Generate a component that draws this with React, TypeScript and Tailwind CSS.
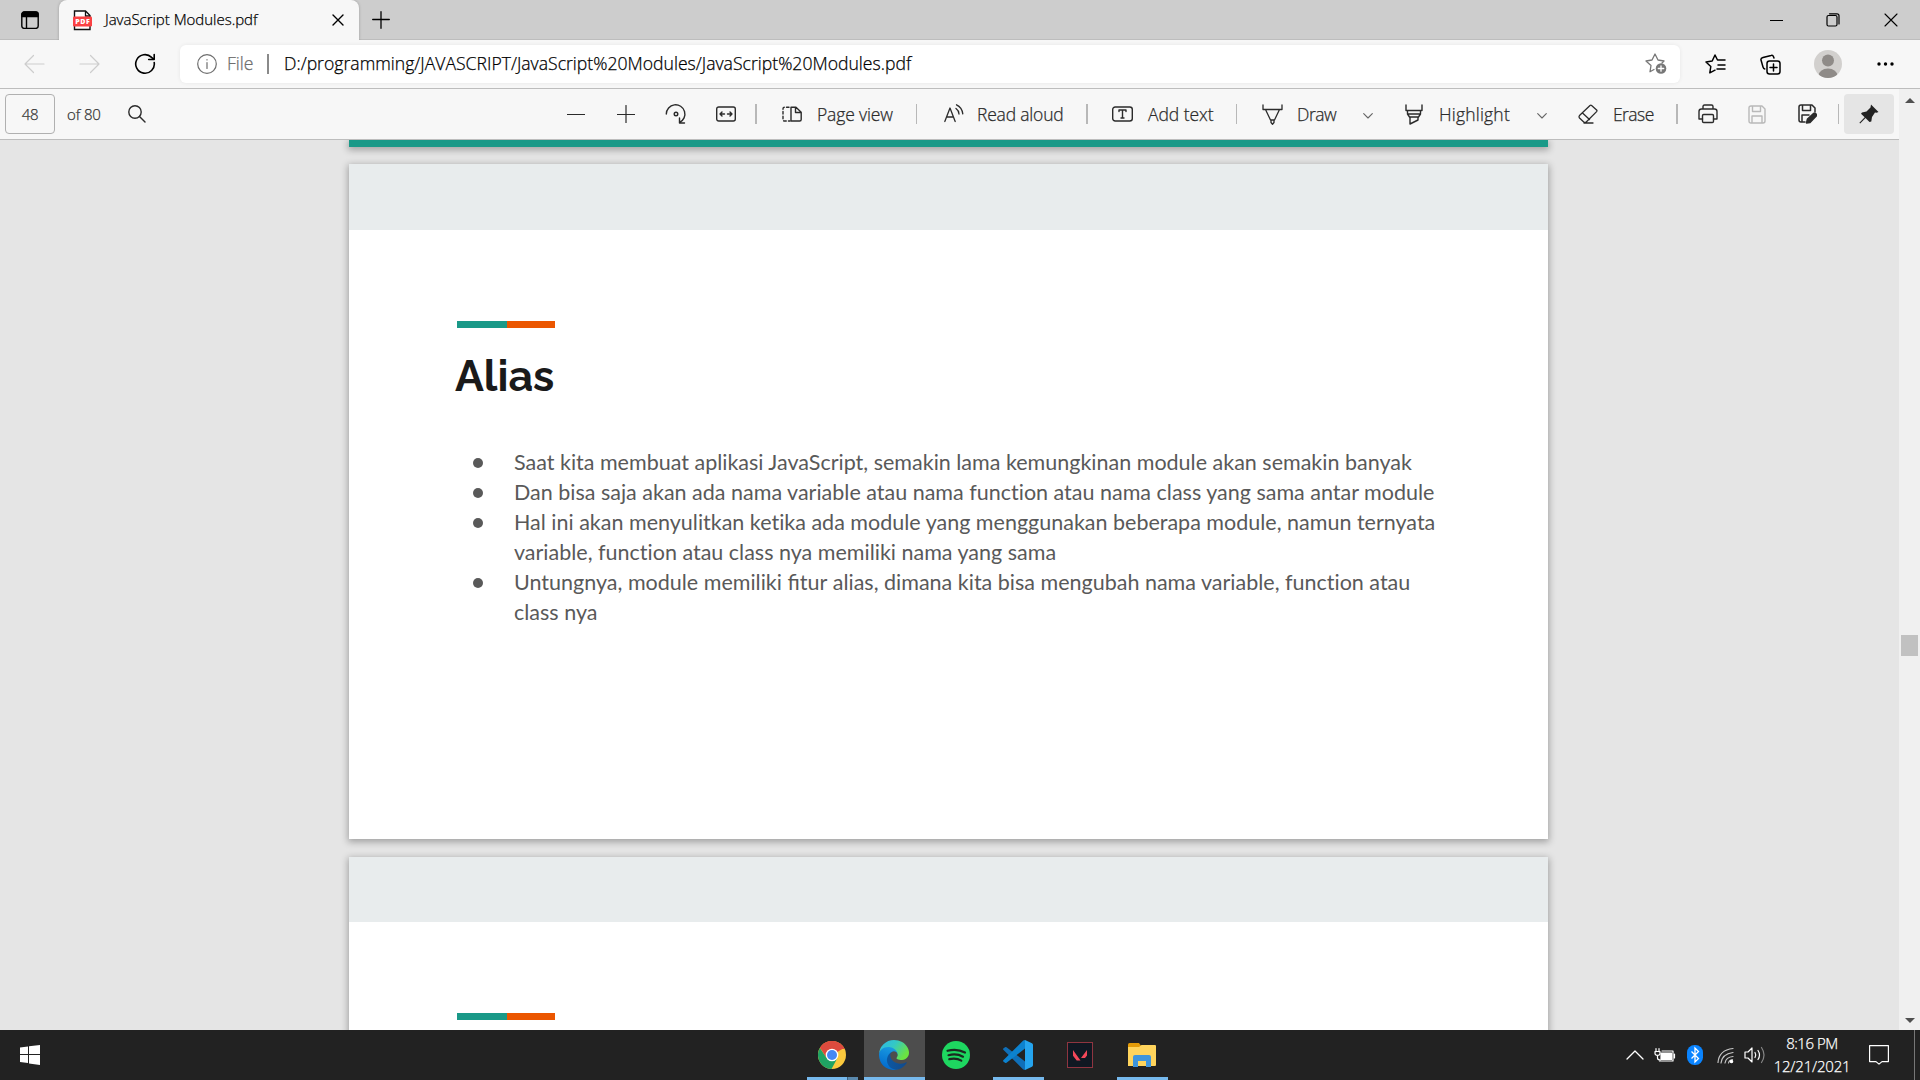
import React from "react";

type IconProps = { w?: number; h?: number; className?: string; children: React.ReactNode; sw?: number };

/* Line icon drawn on a pixel-sized canvas */
function Icon({ w = 20, h = 20, className = "", children, sw = 1.2 }: IconProps) {
  return (
    <svg width={w} height={h} viewBox={`0 0 ${w} ${h}`} fill="none" stroke="currentColor" strokeWidth={sw} strokeLinecap="round" strokeLinejoin="round" className={`shrink-0 ${className}`}>
      {children}
    </svg>
  );
}

function TitleBar() {
  return (
    <div className="flex h-10 shrink-0 bg-[#cdcdcd] shadow-[inset_0_-1px_0_#bdbdbd]">
      <div className="flex w-[59px] items-center pl-[21px]">
        <Icon w={18} h={18} sw={1.4}>
          <rect x="0.8" y="1" width="16.4" height="16.4" rx="2.5" />
          <path d="M1 3.5Q1 1 3.5 1h11Q17 1 17 3.5v2H1z" fill="currentColor" />
          <path d="M5.5 5v12" />
        </Icon>
      </div>
      <div className="relative z-10 flex h-10 w-[300px] items-center rounded-t-lg bg-[#f7f7f7] shadow-[0_0_3px_rgba(0,0,0,0.25)] [clip-path:inset(0_-4px_0_-4px)]">
        <svg width="19" height="21" viewBox="0 0 19 21" className="ml-[14px] shrink-0">
          <path d="M1.5 1h11l4.5 4.5V19.500H1.500z" fill="#fff" stroke="#111" strokeWidth="1.4" />
          <path d="M12.500 1v5H17" fill="none" stroke="#111" strokeWidth="1.300" />
          <rect x="0" y="6.500" width="19" height="10" rx="1.200" fill="#fa4143" />
          <text x="9.500" y="14.200" textAnchor="middle" fontSize="7" fontWeight="800" fill="#fff" fontFamily="Open Sans, sans-serif" textLength="14.500">PDF</text>
        </svg>
        <span className="ml-[13px] w-[200px] pb-px text-[15px] tracking-[-0.02px] whitespace-nowrap">JavaScript Modules.pdf</span>
        <Icon w={12} h={12} className="absolute top-[14px] left-[273px]" sw={1.4}>
          <path d="M1 1l10 10M11 1L1 11" />
        </Icon>
      </div>
      <Icon w={18} h={18} className="mt-[11px] ml-[13px]" sw={1.3}>
        <path d="M9 .7v16.600M.7 8.500h16.600" />
      </Icon>
      <div className="ml-auto flex items-center pr-[22px]">
        <Icon w={13} h={13} className="mr-[43px]"><path d="M0 6.500h13" /></Icon>
        <Icon w={14} h={14} className="mr-[44px]">
          <rect x="1" y="2.500" width="10" height="10.500" rx="1.500" />
          <path d="M3.500.8H11q2 0 2 2V11" />
        </Icon>
        <Icon w={14} h={14} sw={1.1}><path d="M1 1l12 12M13 1L1 13" /></Icon>
      </div>
    </div>
  );
}

function AddressBar() {
  return (
    <div className="flex h-12 shrink-0 items-center bg-[#f7f7f7] text-black">
      <Icon w={21} h={20} className="ml-[24px] text-[#cdcdcd]"><path d="M20 10H1M9.500 1.500L1 10l8.500 8.500" /></Icon>
      <Icon w={21} h={20} className="ml-[34px] text-[#cdcdcd]"><path d="M1 10h19M11.500 1.500L20 10l-8.500 8.500" /></Icon>
      <Icon w={22} h={22} className="ml-[34px]" sw={1.6}>
        <path d="M20.200 9.500A9.300 9.300 0 1 1 17.600 4.400L20 6.500M20.200 1.500v5h-5.500" />
      </Icon>
      <div className="ml-[24px] flex h-[38px] w-[1500px] items-center rounded-md bg-white shadow-[0_0_4px_rgba(0,0,0,0.07)]">
        <Icon w={20} h={20} className="ml-[17px] text-[#6e6e6e]">
          <circle cx="10" cy="10" r="9.300" />
          <path d="M10 8.500v6M10 5.700v.2" />
        </Icon>
        <span className="ml-[10px] w-[40px] pb-px text-[17.600px] text-[#6e6e6e]">File</span>
        <div className="h-5 w-[2px] bg-[#8a8a8a]" />
        <span className="ml-[15px] pb-px text-[17.600px] tracking-[0.01px] whitespace-nowrap">D:/programming/JAVASCRIPT/JavaScript%20Modules/JavaScript%20Modules.pdf</span>
        <Icon w={22} h={22} className="mr-[13px] ml-auto text-[#777]" sw={1.3}>
          <path d="M9 16.500l-4 2.300 1-6.300L1 8l6-1 3-6 3 6 6 1-2 2" />
          <circle cx="16" cy="15.500" r="5.300" fill="currentColor" stroke="none" />
          <path d="M16 12.800v5.400M13.300 15.500h5.400" stroke="#fff" />
        </Icon>
      </div>
      <Icon w={21} h={20} className="ml-[25px]" sw={1.5}>
        <path d="M10 16.200l-5.200 2.600 1-6.300L1 8l6.200-1L10 1l2.500 5h7.500M13 11h7M12 15h8" />
      </Icon>
      <Icon w={21} h={21} className="ml-[34px]" sw={1.5}>
        <rect x="7" y="7" width="13" height="13" rx="2.500" />
        <path d="M13.500 10v7M10 13.500h7M14 4l-.6-1.600q-.6-1.600-2.300-1L3 3.500Q.5 4.300 1 6l2 7q.5 1.800 1.800 2" />
      </Icon>
      <svg width="28" height="28" viewBox="0 0 28 28" className="ml-[33px]">
        <clipPath id="avatar"><circle cx="14" cy="14" r="14" /></clipPath>
        <g clipPath="url(#avatar)">
          <rect width="28" height="28" fill="#d2d0ce" />
          <circle cx="14" cy="10.500" r="6" fill="#8f8b88" />
          <ellipse cx="14" cy="26" rx="9.700" ry="7.500" fill="#8f8b88" />
        </g>
      </svg>
      <svg width="17" height="4" className="ml-[35px]"><circle cx="2" cy="2" r="1.700" /><circle cx="8.500" cy="2" r="1.700" /><circle cx="15" cy="2" r="1.700" /></svg>
    </div>
  );
}

function Label({ w, className = "", children }: { w: number; className?: string; children: string }) {
  return <span style={{ width: w }} className={`shrink-0 text-[17.500px] whitespace-nowrap ${className}`}>{children}</span>;
}

function Divider({ className = "" }: { className?: string }) {
  return <div className={`h-5 shrink-0 bg-[#b8b8b8] ${className}`} />;
}

function Chevron({ className = "" }: { className?: string }) {
  return <Icon w={10} h={6} className={`mt-[3px] text-[#666] ${className}`} sw={1.1}><path d="M.7.700L5 5 9.300.700" /></Icon>;
}

function PdfToolbar() {
  return (
    <div className="flex h-[51px] w-full shrink-0 items-center border-b border-[#bdbdbd] bg-[#f7f7f7] text-[#2b2b2b]">
      <div className="ml-[5px] flex h-10 w-[50px] items-center justify-center rounded-sm border border-[#b0b0b0] text-[15px] tracking-[-0.200px] text-[#333]">48</div>
      <span className="ml-[12px] w-[61px] text-[15px] tracking-[-0.100px] text-[#333]">of 80</span>
      <Icon w={18} h={18} sw={1.400}><circle cx="7" cy="7" r="6.200" /><path d="M11.500 11.500L17 17" /></Icon>
      <Icon w={18} h={18} className="ml-[421px]"><path d="M.5 9.500h17" /></Icon>
      <Icon w={18} h={18} className="ml-[32px]"><path d="M.5 9.500h17M9 .5v17.500" /></Icon>
      <Icon w={22} h={22} className="ml-[30px]" sw={1.400}>
        <path d="M1.300 11A9.300 9.300 0 1 1 14.500 19.500M14.500 15v5h5" />
        <circle cx="11" cy="11" r="1.800" />
      </Icon>
      <Icon w={20} h={16} className="ml-[29px]" sw={1.400}>
        <rect x=".7" y="1" width="18.600" height="14" rx="2" />
        <path d="M4 8h4.500M6 6L4 8l2 2M11.500 8H16M14 6l2 2-2 2" />
      </Icon>
      <Divider className="ml-[19px] w-[2px]" />
      <Icon w={20} h={16} className="ml-[25px]" sw={1.400}>
        <path d="M9 1.200h5l5.200 5v7.300q0 1.500-1.500 1.500H9zM13.500 1.500V6.500h5.500" />
        <path d="M7 1.200H2.500Q1 1.200 1 2.700v10.800Q1 15 2.500 15H8" strokeDasharray="2.500 2.200" />
      </Icon>
      <Label w={84} className="ml-[15px] tracking-[-0.150px]">Page view</Label>
      <Divider className="ml-[15px] w-px" />
      <Icon w={20} h={20} className="ml-[27px]" sw={1.300}>
        <path d="M.8 17.500L6 4l5.200 13.500M2.500 13h7M12 4.500q2.800 2 3 5.500M12.500.8q5.500 2.500 6.300 9" />
      </Icon>
      <Label w={95} className="ml-[13px] tracking-[-0.200px]">Read aloud</Label>
      <Divider className="ml-[14px] w-[2px]" />
      <Icon w={21} h={16} className="ml-[24px]" sw={1.400}>
        <rect x=".7" y="1" width="19.600" height="14" rx="2.500" />
        <path d="M7 5.500V4h7v1.500M10.500 4v8M9 12h3" />
      </Icon>
      <Label w={74} className="ml-[15px] tracking-[-0.060px]">Add text</Label>
      <Divider className="ml-[14px] w-px" />
      <Icon w={21} h={21} className="ml-[25px]" sw={1.300}>
        <path d="M1 1v4.500h19V1M3.500 5.500l5 10.500h4l5-10.500M9 16v2.500l1.500 1.700 1.500-1.700V16" />
      </Icon>
      <Label w={59} className="ml-[14px] tracking-[-0.450px]">Draw</Label>
      <Chevron className="ml-[7px]" />
      <Icon w={18} h={21} className="ml-[32px]" sw={1.400}>
        <path d="M1 1v5.500h16V1M2.500 6.500v3.500l2 3h9l2-3V6.500M5 13v7l8-4v-3M2.500 10h13" />
      </Icon>
      <Label w={83} className="ml-[16px] tracking-[0.200px]">Highlight</Label>
      <Chevron className="ml-[15px]" />
      <Icon w={20} h={20} className="ml-[31px]" sw={1.300}>
        <path d="M1.500 11.500L12 1.500q.800-.700 1.600 0l5 4.500q.700.800 0 1.600L8 18.300H6L1.500 14q-.9-1.200 0-2.500zM4.500 9l7 6.500M6 19h9" />
      </Icon>
      <Label w={49} className="ml-[15px] tracking-[-0.550px]">Erase</Label>
      <Divider className="ml-[14px] w-[2px]" />
      <Icon w={20} h={20} className="ml-[20px]" sw={1.400}>
        <path d="M4.500 15H1V7.500Q1 5 3.500 5h13Q19 5 19 7.500V15h-3.500M5 5V2.500Q5 1 6.500 1h7Q15 1 15 2.500V5" />
        <rect x="4.500" y="10.500" width="11" height="8" rx="1.200" />
      </Icon>
      <Icon w={18} h={19} className="ml-[30px] text-[#b9b9b9]" sw={1.400}>
        <path d="M1 3q0-2 2-2h11l3 3v12q0 2-2 2H3q-2 0-2-2zM4.500 1v5.500h8V1M4 18v-7h10v7" />
      </Icon>
      <Icon w={19} h={20} className="ml-[32px]" sw={1.500}>
        <path d="M7 18H3q-2 0-2-2V3q0-2 2-2h11l3 3v4M4.500 1v5.500h8V1M4 18v-7h7" />
        <path d="M8.500 19l1-4 6-5.500q1.500-.800 2.500.500t0 2.200L12 18.500z" fill="currentColor" />
      </Icon>
      <Divider className="ml-[21px] w-px" />
      <div className="ml-[5px] flex h-10 w-[50px] items-center justify-center rounded-sm bg-[#e5e5e5]">
        <svg width="20" height="20" viewBox="0 0 20 20"><path d="M12 .5l7.500 7.500-2 .8-1.500-.2-3 4.400-.7 4.500-1.800.5-4-4-5.300 5.500-.8-.8 5.300-5.400-3.700-3.500 1-1.300 4.500-1 4-4z" fill="#222" /></svg>
      </div>
    </div>
  );
}

function PageFrame({ children, className = "" }: { children?: React.ReactNode; className?: string }) {
  return <div className={`ml-[349px] w-[1199px] shrink-0 shadow-[0_2px_7px_1px_rgba(0,0,0,0.3)] ${className}`}>{children}</div>;
}

function Accent({ className = "" }: { className?: string }) {
  return (
    <div className={`ml-[108px] flex h-[7px] w-[98px] bg-[#eb5600] ${className}`}>
      <div className="w-[50px] bg-[#1a9988]" />
    </div>
  );
}

const BULLETS: React.ReactNode[][] = [
  ["Saat kita membuat aplikasi JavaScript, semakin lama kemungkinan module akan semakin banyak"],
  ["Dan bisa saja akan ada nama variable atau nama function atau nama class yang sama antar module"],
  [
    "Hal ini akan menyulitkan ketika ada module yang menggunakan beberapa module, namun ternyata",
    "variable, function atau class nya memiliki nama yang sama",
  ],
  [
    <>Untungnya, module memiliki <span className="[font-variant-ligatures:normal]">fitur</span> alias, dimana kita bisa mengubah nama variable, function atau</>,
    "class nya",
  ],
];

function Document() {
  return (
    <div className="flex min-h-0 w-[1899px] flex-1 flex-col overflow-hidden bg-[#e5e5e5] font-normal [-webkit-text-stroke:0px]">
      <PageFrame className="h-[7px] bg-[#1a9988]" />
      <PageFrame className="mt-[17px] h-[675px] bg-white">
        <div className="h-[66px] bg-[#e8eced]" />
        <Accent className="mt-[91px]" />
        <h1 className="mt-[20px] ml-[106px] h-[56px] font-[Raleway,Lato] text-[43px] leading-[56px] font-bold text-[#1a1a1a]">Alias</h1>
        <ul className="mt-[43px] ml-[124px] font-[Lato] text-[21.500px] leading-[30px] text-[#595959] [font-variant-ligatures:none]">
          {BULLETS.map((lines, i) => (
            <li key={i} className="flex">
              <span className="mt-[11px] mr-[31px] h-[10px] w-[10px] shrink-0 rounded-full bg-[#595959]" />
              <div>
                {lines.map((line, j) => <p key={j} className="h-[30px] whitespace-nowrap">{line}</p>)}
              </div>
            </li>
          ))}
        </ul>
      </PageFrame>
      <PageFrame className="mt-[18px] h-[675px] bg-white">
        <div className="h-[65px] bg-[#e8eced]" />
        <Accent className="mt-[91px]" />
      </PageFrame>
    </div>
  );
}

function Scrollbar() {
  return (
    <div className="flex w-[21px] shrink-0 flex-col items-center bg-[#f0f0f0]">
      <svg width="10" height="5" className="mt-[9px]"><path d="M0 5l5-5 5 5z" fill="#505050" /></svg>
      <div className="mt-[532px] h-[21px] w-[17px] bg-[#c1c1c1]" />
      <svg width="10" height="5" className="mt-auto mb-[7px]"><path d="M0 0l5 5 5-5z" fill="#505050" /></svg>
    </div>
  );
}

function Slot({ className = "", bar = "", children }: { className?: string; bar?: string; children: React.ReactNode }) {
  return (
    <div className={`relative flex h-[50px] shrink-0 items-center justify-center ${className}`}>
      {children}
      {bar && <div className={`absolute bottom-0 h-[3px] bg-[#76b9ed] ${bar}`} />}
    </div>
  );
}

function Taskbar() {
  return (
    <div className="flex h-[50px] shrink-0 bg-[#222222] text-white">
      <svg width="20" height="20" viewBox="0 0 20 20" className="mt-[15px] ml-[20px]" fill="#fff">
        <path d="M0 2.500l8-1V9H0zM9 1.300L20 0v9H9zM0 10h8v8l-8-.900zM9 10h11v10L9 18.500z" />
      </svg>
      <div className="ml-[767px] flex">
        <Slot className="w-[51px]" bar="left-0 w-[51px]">
          <svg width="28" height="28" viewBox="0 0 28 28" className="mr-[2px]">
            <circle cx="14" cy="14" r="14" fill="#fbc93d" />
            <path d="M14 14L1.900 7A14 14 0 0 1 26.100 7z" fill="#dd4b3e" />
            <path d="M14 8h12.600A14 14 0 0 0 2 6.800L8.500 17z" fill="#dd4b3e" />
            <path d="M1.900 6.900A14 14 0 0 0 13.500 28l5.700-10.500L14 20 8.500 17z" fill="#1fa363" />
            <circle cx="14" cy="14" r="6.300" fill="#fff" />
            <circle cx="14" cy="14" r="5" fill="#4688f4" />
          </svg>
          <div className="absolute right-0 bottom-0 z-10 h-[3px] w-[11px] border-l border-[#3c607c] bg-[#5a89ad]" />
        </Slot>
        <Slot className="ml-[6px] w-[61px] bg-[#4d4d4d]" bar="left-0 w-[61px]">
          <svg width="30" height="30" viewBox="0 0 256 256" className="mr-px">
            <defs>
              <linearGradient id="eA" x1="0" y1="0" x2="1" y2="0"><stop offset="0" stopColor="#0c59a4" /><stop offset="1" stopColor="#114a8b" /></linearGradient>
              <linearGradient id="eB" x1=".6" y1="0" x2=".3" y2="1"><stop offset="0" stopColor="#1b9de2" /><stop offset="1" stopColor="#0067cc" /></linearGradient>
              <linearGradient id="eC" x1="0" y1="0" x2="1" y2=".5"><stop offset="0" stopColor="#2cb6e8" /><stop offset=".5" stopColor="#34c8c5" /><stop offset="1" stopColor="#6be440" /></linearGradient>
            </defs>
            <path d="M231 190.500a93.700 93.700 0 0 1-10.500 4.700 101.900 101.900 0 0 1-35.900 6.500c-47.300 0-88.500-32.500-88.500-74.300a31.500 31.500 0 0 1 16.400-27.300c-42.800 1.800-53.800 46.400-53.800 72.500 0 73.900 68.100 81.400 82.800 81.400 7.900 0 19.800-2.300 27-4.600l1.300-.4a128.300 128.300 0 0 0 66.600-52.800 4 4 0 0 0-5.400-5.700z" fill="url(#eA)" />
            <path d="M105.700 241.400a79.200 79.200 0 0 1-22.700-21.300 80.700 80.700 0 0 1 29.500-120c3.200-1.500 8.500-4.100 15.600-4a32.400 32.400 0 0 1 25.700 13 31.900 31.900 0 0 1 6.300 18.700c0-.2 24.500-79.600-80-79.600-43.900 0-80 41.700-80 78.200a130.200 130.200 0 0 0 12.100 56 128 128 0 0 0 156.400 67 75.500 75.500 0 0 1-62.800-8z" fill="url(#eB)" />
            <path d="M152.300 148.900c-.8 1-3.300 2.500-3.300 5.700 0 2.600 1.700 5.100 4.700 7.200 14.400 10 41.500 8.700 41.600 8.700a59.600 59.600 0 0 0 30.300-8.300 61.400 61.400 0 0 0 30.400-52.900c.3-22.400-8-37.300-11.300-43.900C223.500 23.900 177.700 0 128 0A128 128 0 0 0 0 126.200c.5-36.500 36.800-66 80-66 3.500 0 23.500.3 42 10a72.600 72.600 0 0 1 30.900 29.300c6.100 10.600 7.200 24.100 7.200 29.500s-2.700 13.300-7.800 19.900z" fill="url(#eC)" />
          </svg>
        </Slot>
        <Slot className="w-[61px]">
          <svg width="28" height="28" viewBox="0 0 28 28">
            <circle cx="14" cy="14" r="14" fill="#1ed760" />
            <path d="M5.500 9.800q9.500-2.600 17.500 1.700M6.500 14.200q8-2.200 14.500 1.500M7.300 18.200q7-1.500 12 1.400" stroke="#1b2a20" strokeWidth="2.200" strokeLinecap="round" fill="none" />
          </svg>
        </Slot>
        <Slot className="ml-[7px] w-[51px]" bar="left-0 w-[51px]">
          <svg width="30" height="30" viewBox="0 0 30 30" className="mr-px">
            <path d="M.3 9.800q-.5-.6 0-1.200L2 7.200q.7-.5 1.500 0L22 21.500V30q-1.200 0-2-.8z" fill="#0f6fb8" />
            <path d="M22 0v8.500L3.500 22.800q-.8.500-1.500 0L.3 21.400q-.5-.6 0-1.200L20 .8q.8-.8 2-.8z" fill="#0c82cf" />
            <path d="M22 0l7 3.300q1 .5 1 1.700v20q0 1.200-1 1.700L22 30z" fill="#25a4ee" />
          </svg>
        </Slot>
        <Slot className="ml-[7px] w-[60px]">
          <svg width="26" height="26" viewBox="0 0 26 26" className="mr-[2px]">
            <rect x=".5" y=".5" width="25" height="25" fill="#101822" stroke="#8f3540" />
            <path d="M6 8l7.500 10.500H9.700L6 13.700zM20 8v5.500l-2 2.500h-4z" fill="#f4485a" />
          </svg>
        </Slot>
        <Slot className="ml-[6px] w-[51px]" bar="left-0 w-[51px]">
          <svg width="28" height="24" viewBox="0 0 28 24" className="mr-px mb-[1px]">
            <path d="M0 1.500Q0 0 1.500 0H11l2.500 3.500L11 5H0z" fill="#e39b09" />
            <path d="M0 4h11l2.500-2H27q1 0 1 1v19q0 1-1 1H0z" fill="#ffd45c" />
            <path d="M5 24V14q0-2 2-2h14q2 0 2 2v10h-5v-6h-8v6z" fill="#3f95dc" />
          </svg>
        </Slot>
      </div>
      <div className="ml-auto flex items-center">
        <Icon w={18} h={10} className="mr-[10px]" sw={1.300}><path d="M1 9l8-8 8 8" /></Icon>
        <Icon w={22} h={15} className="mr-[11px]" sw={1.200}>
          <path d="M2 .6v3M5 .6v3M1 3.500h5v2q0 1.800-2.500 1.800T1 5.500zM3.500 7.500V10q0 2 3 2" />
          <path d="M8 3h11v10H5.500M20.500 6v4" />
          <rect x="7" y="5" width="10.500" height="6.500" fill="currentColor" />
        </Icon>
        <svg width="16" height="20" viewBox="0 0 16 20" className="mr-[14px]">
          <rect width="16" height="20" rx="7.500" fill="#0a84ff" />
          <path d="M4.500 6.500l7 7L8 17V3l3.500 3.500-7 7" fill="none" stroke="#fff" strokeWidth="1.300" />
        </svg>
        <Icon w={18} h={17} className="mr-[9px]" sw={1.200}>
          <path d="M1 15.500Q2 3 16 1.500M4 16Q5 7 16 5.500M8 16q1-6 8-6.500" opacity=".75" />
          <path d="M11.500 16q.5-3 4-3.500" opacity=".7" />
          <circle cx="14.500" cy="14.500" r="1.200" fill="currentColor" />
        </Icon>
        <Icon w={22} h={18} className="mr-[9px]" sw={1.200}>
          <path d="M1 6h3l4-4v14l-4-4H1z" />
          <path d="M11 6.500q1.500 2.500 0 5M14 4.500q3 4.500 0 9" />
          <path d="M17.500 1.500q5 7.500 0 15" opacity=".45" />
        </Icon>
        <div className="flex w-[74px] flex-col items-center text-[15px] leading-[23px] tracking-[-0.450px] whitespace-nowrap">
          <span>8:16 PM</span>
          <span className="tracking-[-0.200px]">12/21/2021</span>
        </div>
        <Icon w={20} h={20} className="ml-[20px]" sw={1.200}><path d="M.6.600h18.800v16h-6.400l-3 2.500-3-2.500H.6z" /></Icon>
        <div className="ml-[25px] h-[50px] w-px bg-[#777]" />
        <div className="w-[5px]" />
      </div>
    </div>
  );
}

export default function App() {
  return (
    <div className="flex h-[1080px] w-[1920px] flex-col overflow-hidden bg-[#e5e5e5] font-['Open_Sans',sans-serif] font-light text-black [-webkit-text-stroke:0.25px]">
      <TitleBar />
      <AddressBar />
      <div className="flex min-h-0 flex-1 border-t border-[#bdbdbd]">
        <div className="flex w-[1899px] shrink-0 flex-col">
          <PdfToolbar />
          <Document />
        </div>
        <Scrollbar />
      </div>
      <Taskbar />
    </div>
  );
}
